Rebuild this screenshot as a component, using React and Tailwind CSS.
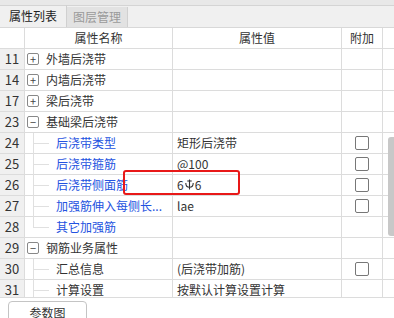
import React from "react";

const rows = [
  { n: "11", type: "group", sign: "+", name: "外墙后浇带" },
  { n: "14", type: "group", sign: "+", name: "内墙后浇带" },
  { n: "17", type: "group", sign: "+", name: "梁后浇带" },
  { n: "23", type: "group", sign: "−", name: "基础梁后浇带" },
  { n: "24", type: "child", blue: true, name: "后浇带类型", value: "矩形后浇带", cb: true },
  { n: "25", type: "child", blue: true, name: "后浇带箍筋", value: "@100", cb: true },
  { n: "26", type: "child", blue: true, name: "后浇带侧面筋", value: "", cb: true, special: true },
  { n: "27", type: "child", blue: true, name: "加强筋伸入每侧长...", value: "lae", cb: true },
  { n: "28", type: "child", blue: true, name: "其它加强筋", value: "", last: true },
  { n: "29", type: "group", sign: "−", name: "钢筋业务属性" },
  { n: "30", type: "child", name: "汇总信息", value: "(后浇带加筋)", cb: true },
  { n: "31", type: "child", name: "计算设置", value: "按默认计算设置计算" },
];

const font = { fontFamily: '"Noto Sans CJK SC", "Noto Sans", sans-serif' };

function RebarSymbol() {
  return (
    <svg width="9" height="11" viewBox="0 0 9 11" className="mx-[1px] relative top-[-1px]" fill="none" stroke="#333" strokeWidth="1.1">
      <path d="M4.5 0.5 V10.5" />
      <path d="M2.3 2 H6.7" />
      <path d="M0.8 4 Q0.8 8.3 4.5 8.3 Q8.2 8.3 8.2 4" />
    </svg>
  );
}

function Row({ r }) {
  return (
    <div className="flex h-[21px] border-b border-[#dcdcdc]">
      <div className="w-[25px] shrink-0 bg-[#f0f0f0] border-r border-[#dcdcdc] flex items-center justify-center text-[13px] text-[#333]">
        {r.n}
      </div>
      <div className="w-[148px] shrink-0 border-r border-[#dcdcdc] relative flex items-center text-[12px]">
        {r.type === "group" ? (
          <>
            <div className="absolute left-[2px] top-[4px] w-[12px] h-[12px] border border-[#888] rounded-[2px] flex items-center justify-center text-[11px] leading-none text-[#444]">
              {r.sign}
            </div>
            <span className="absolute left-[21px] text-[#333]">{r.name}</span>
          </>
        ) : (
          <>
            <div className={"absolute left-[8px] top-0 w-px bg-[#e0e0e0] " + (r.last ? "h-[10px]" : "h-[21px]")} />
            <div className="absolute left-[8px] top-[10px] w-[16px] h-px bg-[#e0e0e0]" />
            <span className={"absolute left-[31px] whitespace-nowrap " + (r.blue ? "text-[#2352e0]" : "text-[#333]")}>{r.name}</span>
          </>
        )}
      </div>
      <div className="w-[169px] shrink-0 border-r border-[#dcdcdc] flex items-center pl-[4px] text-[12px] text-[#333] whitespace-nowrap">
        {r.special ? (
          <span className="flex items-center">
            6<RebarSymbol />6
          </span>
        ) : (
          r.value
        )}
      </div>
      <div className="w-[41px] shrink-0 border-r border-[#dcdcdc] flex items-center justify-center">
        {r.cb && <div className="w-[14px] h-[14px] border border-[#777] rounded-[2px] bg-white" />}
      </div>
    </div>
  );
}

export default function App() {
  return (
    <div className="w-[394px] h-[318px] bg-white overflow-hidden relative" style={font}>
      <div className="h-[6px] bg-[#e8e8e8] border-b border-[#d4d4d4]" />
      <div className="h-[22px] bg-[#f0f0f0] flex items-end border-b border-[#d8d8d8]">
        <div className="w-[67px] h-[22px] flex items-center justify-center text-[12px] text-[#222] border-r border-[#d0d0d0]">
          属性列表
        </div>
        <div className="w-[61px] h-[20px] bg-[#e2e2e2] border-r border-[#d0d0d0] flex items-center justify-center text-[12px] text-[#9a9a9a]">
          图层管理
        </div>
      </div>
      <div className="relative h-[270px] overflow-hidden border-b border-[#dcdcdc]">
        <div className="flex h-[21px] border-b border-[#dcdcdc] text-[12px] text-[#333]">
          <div className="w-[25px] shrink-0 border-r border-[#dcdcdc]" />
          <div className="w-[148px] shrink-0 border-r border-[#dcdcdc] flex items-center justify-center">属性名称</div>
          <div className="w-[169px] shrink-0 border-r border-[#dcdcdc] flex items-center justify-center">属性值</div>
          <div className="w-[41px] shrink-0 border-r border-[#dcdcdc] flex items-center justify-center">附加</div>
        </div>
        {rows.map((r) => (
          <Row key={r.n} r={r} />
        ))}
        <div className="absolute left-[123px] top-[142px] w-[117px] h-[25px] border-2 border-[#e81818] rounded-[3px]" />
        <div className="absolute left-[388px] top-[109px] w-[6px] h-[99px] bg-[#c8c8c8] rounded-l-[3px]" />
      </div>
      <div className="pl-[8px] pt-[3px]">
        <div className="w-[79px] h-[24px] border border-[#c4c4c4] rounded-[4px] bg-white flex items-center justify-center text-[12px] text-[#333]">
          参数图
        </div>
      </div>
    </div>
  );
}
